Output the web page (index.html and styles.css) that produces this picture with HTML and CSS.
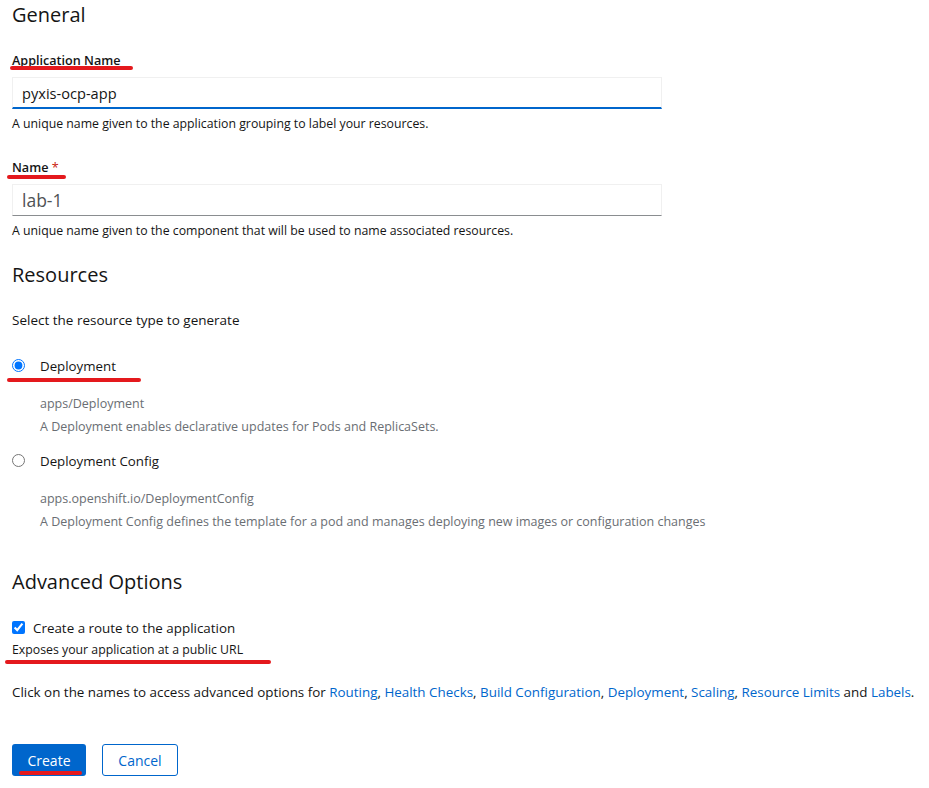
FILE: index.html
```html
<!DOCTYPE html>
<html>
<head>
<meta charset="utf-8">
<link rel="stylesheet" href="styles.css">
</head>
<body>
<form class="form">
  <h2 class="heading heading-general">General</h2>

  <div class="field field-first">
    <label class="label"><span class="mark mark-appname"></span>Application Name</label>
    <div class="input input-active">pyxis-ocp-app</div>
    <div class="helper">A unique name given to the application grouping to label your resources.</div>
  </div>

  <div class="field field-second">
    <label class="label"><span class="mark mark-name"></span>Name <span class="req">*</span></label>
    <div class="input input-name">lab-1</div>
    <div class="helper">A unique name given to the component that will be used to name associated resources.</div>
  </div>

  <h2 class="heading heading-resources">Resources</h2>
  <p class="text select-text">Select the resource type to generate</p>

  <div class="radio-row radio-first">
    <input type="radio" class="radio" name="res" checked>
    <span class="radio-label"><span class="mark mark-deploy"></span>Deployment</span>
  </div>
  <div class="radio-desc">
    <div class="muted">apps/Deployment</div>
    <div class="muted">A Deployment enables declarative updates for Pods and ReplicaSets.</div>
  </div>

  <div class="radio-row radio-second">
    <input type="radio" class="radio" name="res">
    <span class="radio-label">Deployment Config</span>
  </div>
  <div class="radio-desc radio-desc-second">
    <div class="muted">apps.openshift.io/DeploymentConfig</div>
    <div class="muted">A Deployment Config defines the template for a pod and manages deploying new images or configuration changes</div>
  </div>

  <h2 class="heading heading-advanced">Advanced Options</h2>

  <div class="check-row">
    <input type="checkbox" class="check" checked>
    <span class="check-label">Create a route to the application</span>
  </div>
  <div class="helper helper-route"><span class="mark mark-route"></span>Exposes your application at a public URL</div>

  <p class="text advanced-text">Click on the names to access advanced options for <a class="link">Routing</a>, <a class="link">Health Checks</a>, <a class="link">Build Configuration</a>, <a class="link">Deployment</a>, <a class="link">Scaling</a>, <a class="link">Resource Limits</a> and <a class="link">Labels</a>.</p>

  <div class="actions">
    <button type="button" class="btn btn-primary"><span class="mark mark-create"></span>Create</button>
    <button type="button" class="btn btn-secondary">Cancel</button>
  </div>
</form>
</body>
</html>
```

FILE: styles.css
```css
* { box-sizing: border-box; }
html, body { margin: 0; padding: 0; background: #fff; }
body {
  font-family: "Open Sans", "Liberation Sans", sans-serif;
  color: #151515;
  font-size: 14px;
}
.form { padding: 0 12px; }

.heading {
  font-family: "Open Sans", "Liberation Sans", sans-serif;
  font-weight: 400;
  font-size: 20px;
  line-height: 26px;
  margin: 0;
  color: #151515;
}
.heading-general { margin-top: 2px; }
.heading-resources { margin-top: 22px; }
.heading-advanced { margin-top: 37px; }

.field-first { margin-top: 22px; }
.field-second { margin-top: 24px; }

.label {
  position: relative;
  display: block;
  font-weight: 600;
  font-size: 12.6px;
  line-height: 21px;
}
.req { color: #c9190b; font-weight: 400; }

.mark {
  position: absolute;
  height: 4px;
  border-radius: 3px;
  background: #e4191d;
}
.mark-appname { left: -2px; width: 123px; top: 16px; }
.mark-name { left: -5px; width: 59px; top: 18px; }
.mark-deploy { left: -33px; width: 134px; top: 21px; }
.mark-route { left: -7px; width: 266px; top: 19px; }
.mark-create { left: 7px; width: 63px; top: 27px; }

.input {
  margin-top: 6px;
  width: 650px;
  height: 32px;
  border: 1px solid #f0f0f0;
  border-bottom-color: #8a8d90;
  padding: 0 9px;
  font-size: 14.6px;
  line-height: 30px;
  color: #151515;
}
.input-active { border-bottom: 2px solid #0066cc; }
.input-name { font-size: 17.5px; color: #4f5255; margin-top: 6px; }

.helper {
  margin-top: 6px;
  font-size: 12.3px;
  line-height: 18px;
  color: #151515;
}
.helper-route { position: relative; margin-top: 3px; }

.text { margin: 0; font-size: 13.5px; line-height: 21px; }
.select-text { margin-top: 22px; }

.radio-row {
  display: flex;
  align-items: center;
  gap: 15px;
  height: 21px;
  font-size: 13.3px;
}
.radio-first { margin-top: 24px; }
.radio-second { margin-top: 13px; }
.radio {
  margin: 0;
  width: 13px;
  height: 13px;
}
.radio-label { position: relative; }

.radio-desc { margin-top: 17px; padding-left: 28px; font-size: 12.5px; }
.radio-desc-second { margin-top: 17px; }
.muted { color: #6a6e73; line-height: 21px; }
.muted + .muted { margin-top: 2px; }

.check-row {
  margin-top: 22px;
  display: flex;
  align-items: center;
  gap: 8px;
  height: 21px;
  font-size: 13.4px;
}
.check { margin: 0; width: 13px; height: 13px; }

.advanced-text { margin-top: 23px; white-space: nowrap; font-size: 13.4px; }
.link { color: #0066cc; text-decoration: none; }

.actions { margin-top: 41px; display: flex; gap: 16px; }
.btn {
  position: relative;
  height: 32px;
  border-radius: 3px;
  font-family: "Open Sans", "Liberation Sans", sans-serif;
  font-size: 14px;
  padding: 0;
}
.btn-primary { width: 74px; background: #0066cc; color: #fff; border: 0; }
.btn-secondary { width: 76px; background: #fff; color: #0066cc; border: 1px solid #0066cc; }
```
